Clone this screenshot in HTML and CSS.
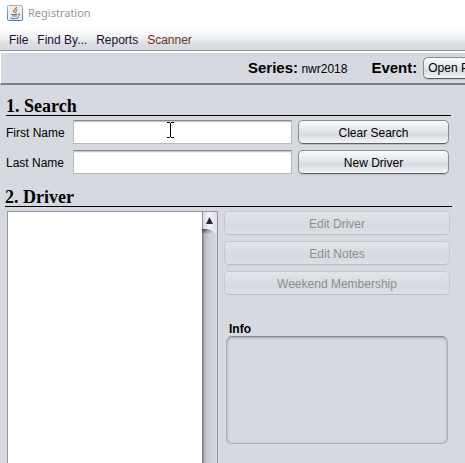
FILE: index.html
```html
<!DOCTYPE html>
<html lang="en">
<head>
<meta charset="utf-8">
<title>Registration</title>
<link rel="stylesheet" href="styles.css">
</head>
<body>
<header class="titlebar">
  <svg class="app-icon" width="16" height="16" viewBox="0 0 16 16" aria-hidden="true">
    <defs><linearGradient id="tile" x1="0" y1="0" x2="0" y2="1"><stop offset="0" stop-color="#9fb2c4"/><stop offset="1" stop-color="#5a7b98"/></linearGradient></defs>
    <rect x="0.5" y="0.5" width="15" height="15" rx="1" fill="#eef1f4" stroke="url(#tile)"/>
    <path d="M9.500 2C9.500 4 6 4.500 6.500 6.500L7.500 8M10.500 4.500C8.500 5.500 8.500 6.500 9 8" fill="none" stroke="#c9792f" stroke-width="1.300"/>
    <path d="M4 9.500H10.500M5 11H10" fill="none" stroke="#5d7b96" stroke-width="1"/>
    <path d="M11 9C13.500 8.500 13.500 10.500 11 11.500M3 12.500C4 14 10 14 12 12.500" fill="none" stroke="#4d6f8e" stroke-width="1"/>
  </svg>
  <span>Registration</span>
</header>
<nav class="menubar">
  <button class="menu" type="button">File</button>
  <button class="menu" type="button">Find By...</button>
  <button class="menu" type="button">Reports</button>
  <button class="menu menu-scanner" type="button">Scanner</button>
</nav>
<div class="toolbar">
  <div class="series"><b>Series:</b> <span>nwr2018</span></div>
  <label class="event-label" for="event">Event:</label>
  <select class="event" id="event"><option>Open Practice</option></select>
</div>
<main>
  <section class="search">
    <h2>1. Search</h2>
    <div class="fields">
      <label for="first">First Name</label>
      <div class="field">
        <input id="first" type="text">
        <svg class="caret" width="7" height="16" viewBox="0 0 7 16" aria-hidden="true"><path d="M0 .5H3M4 .5H7M3.500 1V15M0 15.500H3M4 15.500H7" stroke="#000" fill="none"/></svg>
      </div>
      <button class="btn" type="button">Clear Search</button>
      <label for="last">Last Name</label>
      <div class="field"><input id="last" type="text"></div>
      <button class="btn" type="button">New Driver</button>
    </div>
  </section>
  <section class="driver">
    <h2>2. Driver</h2>
    <div class="columns">
      <div class="list">
        <div class="list-items" role="listbox" aria-label="Drivers"></div>
        <div class="scroll">
          <button class="scroll-up" type="button" aria-label="Scroll up">
            <svg width="15" height="25" viewBox="0 0 15 25" aria-hidden="true">
              <defs>
                <linearGradient id="cap"><stop offset="0" stop-color="#d3d5dc"/><stop offset=".5" stop-color="#f4f5f8"/><stop offset="1" stop-color="#dcdee5"/></linearGradient>
                <linearGradient id="shade" x1="0" y1="0" x2="1" y2="1"><stop offset="0" stop-color="#343039"/><stop offset=".7" stop-color="#b5b8c0" stop-opacity="0"/></linearGradient>
              </defs>
              <path d="M0 17H4C9 17 13 20 15 25L9 22L0 21Z" fill="url(#shade)"/>
              <path d="M0 0H15V25C13 20 9 17 4 17H0Z" fill="url(#cap)"/>
              <path d="M0 0V17" stroke="#8d9098" stroke-width="2"/>
              <path d="M7.500 5L11 12H4Z" fill="#33203c"/>
            </svg>
          </button>
        </div>
      </div>
      <div class="side">
        <button class="btn" type="button" disabled>Edit Driver</button>
        <button class="btn" type="button" disabled>Edit Notes</button>
        <button class="btn" type="button" disabled>Weekend Membership</button>
        <div class="info">
          <h3 id="info-title">Info</h3>
          <div class="info-box" role="region" aria-labelledby="info-title"></div>
        </div>
      </div>
    </div>
  </section>
</main>
</body>
</html>
```

FILE: styles.css
```css
* { box-sizing: border-box; }
body {
  margin: 0;
  height: 100vh;
  display: flex;
  flex-direction: column;
  overflow: hidden;
  background: #d6d9e0;
  color: #000;
  font: 12px/16px "Liberation Sans", Arial, sans-serif;
}
button, input, select { font: inherit; color: inherit; margin: 0; }

.titlebar {
  flex: none;
  display: flex;
  align-items: center;
  gap: 5px;
  height: 28px;
  padding: 0 7px 2px;
  background: #fff;
  color: #969696;
  font-family: "Noto Sans", "Open Sans", sans-serif;
  font-size: 11px;
}
.menubar {
  flex: none;
  display: flex;
  align-items: center;
  gap: 9px;
  height: 23px;
  padding: 2px 9px 0;
  background: linear-gradient(#fff, #f4f5f7 35%, #d9dce2 75%, #d6d9e0);
  border-bottom: 1px solid #8f939d;
}
.menu {
  padding: 0;
  border: 0;
  background: none;
  color: #23102f;
  white-space: nowrap;
}
.menu-scanner { color: #6e3418; }
.toolbar {
  flex: none;
  display: flex;
  align-items: center;
  height: 34px;
  padding-left: 247px;
  border-top: 2px solid #fff;
  border-left: 1px solid #fff;
  border-bottom: 2px solid #7b7e86;
  white-space: nowrap;
}
.series { margin-right: 24px; }
.series b, .event-label { font-size: 15px; font-weight: bold; }
.event-label { margin-right: 6px; }
.event {
  flex: 1;
  min-width: 0;
  appearance: none;
  height: 22px;
  padding: 0 0 0 4px;
  border: 1px solid #8b8e95;
  border-bottom-color: #5d6067;
  border-right: 0;
  border-radius: 5px 0 0 5px;
  background: linear-gradient(#fafbfc, #e2e5ea 50%, #d7dae0 60%, #f2f4f7);
  box-shadow: 0 1px 1px #b9bcc4;
  text-overflow: clip;
}

main { flex: 1; display: flex; flex-direction: column; min-height: 0; }
h2 {
  margin: 0;
  height: 20px;
  border-bottom: 1px solid #000;
  font: bold 18px/20px "Liberation Serif", "Times New Roman", serif;
}
.search { padding: 11px 14px 0 6px; }
.fields {
  display: grid;
  grid-template-columns: 61px 1fr 151px;
  align-items: center;
  gap: 6px;
  padding: 4px 2px 0 0;
}
.fields label { padding-top: 2px; white-space: nowrap; }
.field { position: relative; height: 24px; }
.field input {
  display: block;
  width: 100%;
  height: 24px;
  padding: 0 6px;
  border: 1px solid #b8bac0;
  border-top: 1px solid #86888d;
  border-radius: 0;
  background: #fff;
  box-shadow: inset 0 1px #c8cacf, inset 0 2px #eeeff1;
}
.caret { position: absolute; left: 94px; top: 2px; }
.btn {
  display: block;
  height: 24px;
  padding: 2px 0 0;
  border: 1px solid #8b8e95;
  border-bottom-color: #5d6067;
  border-radius: 5px;
  background: linear-gradient(#fafbfc, #e2e5ea 45%, #d7dae0 62%, #f4f6f9);
  box-shadow: 0 1px 1px #b9bcc4;
}
.btn:disabled {
  border-color: #c5c8cc;
  border-bottom-color: #bbbdc1;
  background: linear-gradient(#e1e4e8, #d8dbe1 50%, #d6d9df 65%, #dcdfe3);
  box-shadow: none;
  color: #8e8f91;
}

.driver {
  flex: 1;
  display: flex;
  flex-direction: column;
  min-height: 0;
  padding: 13px 13px 0 5px;
}
.columns {
  flex: 1;
  display: grid;
  grid-template-columns: 211px 1fr;
  gap: 6px;
  min-height: 0;
  padding: 4px 2px 0;
}
.list {
  display: flex;
  border: 1px solid #9297a1;
  border-bottom: 0;
  background: #fff;
}
.list-items { flex: 1; }
.scroll {
  width: 15px;
  background: linear-gradient(90deg, #65676e, #a9abb2 13%, #c1c2c9 28%, #d0d1d8 55%, #d6d7de);
}
.scroll-up { display: block; padding: 0; border: 0; background: none; line-height: 0; }
.side { display: flex; flex-direction: column; gap: 6px; }
.info { padding: 20px 2px 0; }
.info h3 {
  margin: 0;
  padding: 1px 0 0 3px;
  font-size: 12px;
  line-height: 14px;
}
.info-box {
  height: 108px;
  border: 1px solid #abaeb4;
  border-top-color: #85888f;
  border-radius: 6px;
  box-shadow: inset 0 1px 3px #a4a7ae;
}
```
